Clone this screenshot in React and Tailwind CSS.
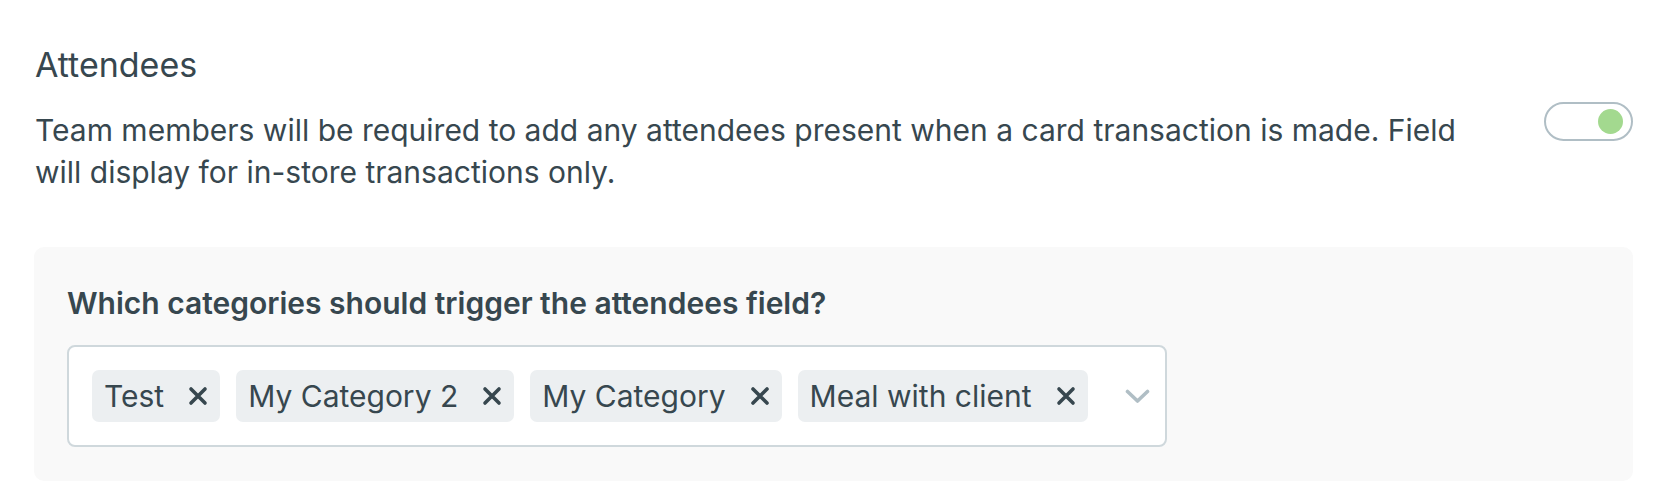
import React, { useState } from 'react';

const categories = ['Test', 'My Category 2', 'My Category', 'Meal with client'];

const CloseIcon = () => (
  <svg width="20" height="20" viewBox="0 0 20 20" fill="none">
    <path d="M3 3L17 17M17 3L3 17" stroke="currentColor" strokeWidth="3.6" strokeLinecap="round" />
  </svg>
);

const Chevron = () => (
  <svg width="25" height="15" viewBox="0 0 25 15" fill="none">
    <path d="M2.5 2.5L12.5 12L22.5 2.5" stroke="#b0bec5" strokeWidth="3.6" strokeLinecap="round" strokeLinejoin="round" />
  </svg>
);

const App = () => {
  const [enabled, setEnabled] = useState(true);
  const [selected, setSelected] = useState(categories);

  return (
    <div className="w-[1670px] h-[498px] bg-white pl-[34px] pr-[37px] pt-[45px] text-[#37474f] font-['Inter',sans-serif]">
      {/* En-tête */}
      <div className="flex items-start justify-between">
        <div className="w-[1470px] pl-px">
          <h2 className="text-[34px] leading-[40px] font-normal">Attendees</h2>
          <p className="mt-[24px] text-[30px] leading-[42px]">
            Team members will be required to add any attendees present when a card transaction is made. Field will display for in-store transactions only.
          </p>
        </div>
        <button
          onClick={() => setEnabled(!enabled)}
          className="mt-[57px] w-[89px] h-[39px] rounded-full border-2 border-[#b0bec5] bg-white flex items-center justify-end pr-[8px]"
        >
          <span className={enabled ? 'w-[25px] h-[25px] rounded-full bg-[#a3d98f]' : 'w-[25px] h-[25px] rounded-full bg-[#cfd8dc]'} />
        </button>
      </div>

      {/* Catégories */}
      <div className="mt-[54px] bg-[#f9f9f9] rounded-[10px] pl-[33px] pt-[38px] pb-[34px]">
        <h3 className="text-[30px] leading-[36px] font-semibold">Which categories should trigger the attendees field?</h3>
        <div className="mt-[24px] w-[1100px] h-[102px] bg-white border-2 border-[#cfd8dc] rounded-[8px] flex items-center pl-[23px] pr-[15px]">
          <div className="flex items-center gap-[16px]">
            {selected.map((c) => (
              <span key={c} className="h-[52px] flex items-center gap-[24px] bg-[#eceff1] rounded-[7px] pl-[12px] pr-[12px] text-[30px]">
                {c}
                <button onClick={() => setSelected(selected.filter((s) => s !== c))} className="text-[#37474f]">
                  <CloseIcon />
                </button>
              </span>
            ))}
          </div>
          <div className="ml-auto">
            <Chevron />
          </div>
        </div>
      </div>
    </div>
  );
};

export default App;
